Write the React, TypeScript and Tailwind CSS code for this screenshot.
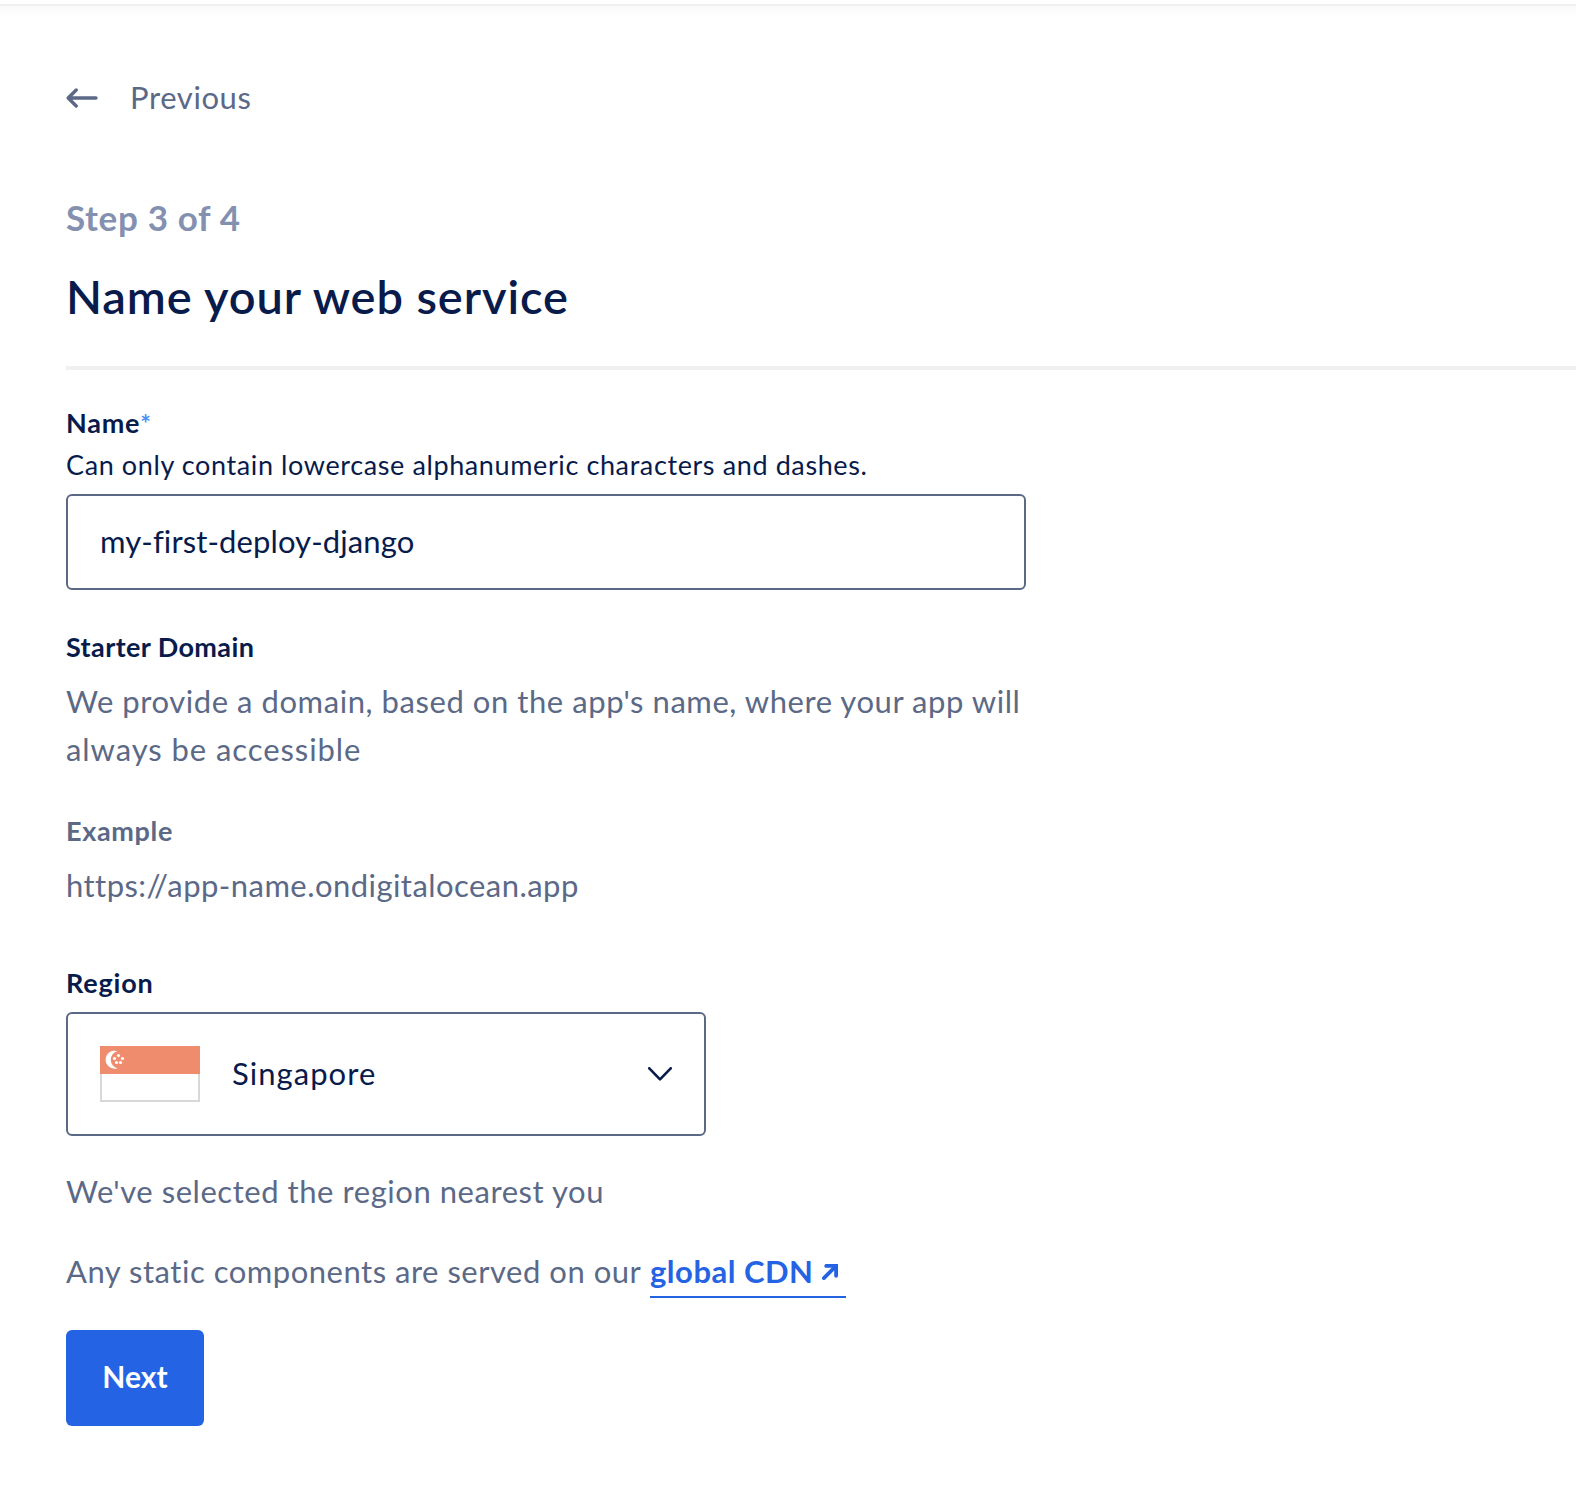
function ArrowLeft() {
  return (
    <svg width="32" height="20" viewBox="0 0 32 20" fill="none" stroke="#5b6987" strokeWidth="3.4" strokeLinecap="round" strokeLinejoin="round">
      <path d="M30 10H2.2M10.2 2L2.2 10l8 8" />
    </svg>
  );
}

function ChevronDown() {
  return (
    <svg width="24" height="14" viewBox="0 0 24 14" fill="none" stroke="#081b4b" strokeWidth="2.6" strokeLinecap="round" strokeLinejoin="round">
      <path d="M1.3 1.3L12 12.3 22.7 1.3" />
    </svg>
  );
}

function ExternalArrow() {
  return (
    <svg className="block" width="16" height="16" viewBox="0 0 16 16" fill="none" stroke="#2463e3" strokeWidth="3.8" strokeLinecap="round">
      <path d="M1.9 14.1L13.4 2.6" />
      <path d="M4.2 1.9h9.9v9.9" strokeLinejoin="miter" />
    </svg>
  );
}

function SingaporeFlag() {
  return (
    <svg width="100" height="56" viewBox="0 0 100 56">
      <rect x="1" y="1" width="98" height="54" fill="#fff" stroke="#d8d8d8" strokeWidth="2" />
      <rect width="100" height="28" fill="#f08c6e" />
      <path d="M17.6 5.2A9 9 0 1 0 17.6 22.2A8.7 8.7 0 0 1 17.6 5.2Z" fill="#fff" />
      <g fill="#fff">
        <circle cx="18.5" cy="9.5" r="1.6" />
        <circle cx="14.5" cy="12.5" r="1.6" />
        <circle cx="22.5" cy="12.5" r="1.6" />
        <circle cx="16.5" cy="16.5" r="1.6" />
        <circle cx="20.5" cy="16.5" r="1.6" />
      </g>
    </svg>
  );
}

export default function App() {
  return (
    <div className="min-h-[1488px] overflow-hidden bg-white font-['Lato',sans-serif] text-[31px] leading-[48px] text-[#5b6987]">
      <div className="mt-1 h-0.5 bg-[#f0f0f0]" />
      <div className="h-2.5 bg-linear-to-b from-[#f9f9f9] to-white" />

      <main className="pl-[66px]">
        <a href="#" className="mt-[57px] flex h-12 items-center">
          <span className="mt-0.5 w-16"><ArrowLeft /></span>
          <span className="tracking-[0.6px]">Previous</span>
        </a>

        <header className="border-b-4 border-[#f0f0f0] pb-[38px] pt-[72px]">
          <p className="text-[35px] font-bold tracking-[0.65px] text-[#8490b0]">Step 3 of 4</p>
          <h1 className="mt-[23px] text-[47px] font-semibold leading-[64px] tracking-[0.9px] text-[#081b4b]">
            Name your web service
          </h1>
        </header>

        <form className="w-[960px]">
          <label className="mt-[33px] flex h-10 text-[27px] font-bold leading-10 text-[#081b4b]">
            <span className="tracking-[0.75px]">Name</span>
            <span className="text-[25px] text-[#4d8df6]">*</span>
          </label>
          <p className="mt-0.5 whitespace-nowrap text-[27px] leading-10 tracking-[0.61px] text-[#081b4b]">
            Can only contain lowercase alphanumeric characters and dashes.
          </p>
          <input
            className="mt-[9px] block h-24 w-full rounded-md border-2 border-[#5b6987] bg-white px-8 pb-[3px] tracking-[0.1px] text-[#081b4b] outline-none"
            defaultValue="my-first-deploy-django"
          />

          <h2 className="mt-[37px] text-[27px] font-bold leading-10 tracking-[0.4px] text-[#081b4b]">Starter Domain</h2>
          <p className="mt-2.5 whitespace-nowrap">
            <span className="tracking-[0.56px]">We provide a domain, based on the app's name, where your app will</span>
            <br />
            <span className="tracking-[0.93px]">always be accessible</span>
          </p>

          <h3 className="mt-[38px] text-[27px] font-bold leading-10 tracking-[0.65px]">Example</h3>
          <p className="mt-2.5 tracking-[0.45px]">https://app-name.ondigitalocean.app</p>

          <h2 className="mt-[54px] text-[27px] font-bold leading-10 tracking-[0.8px] text-[#081b4b]">Region</h2>
          <button
            type="button"
            className="mt-[9px] flex h-31 w-[640px] items-center rounded-md border-2 border-[#5b6987] px-8 text-[#081b4b]"
          >
            <SingaporeFlag />
            <span className="ml-8 pb-[3px] tracking-[1.05px]">Singapore</span>
            <span className="ml-auto"><ChevronDown /></span>
          </button>

          <p className="mt-[31px] tracking-[0.55px]">We've selected the region nearest you</p>
          <p className="mt-8 flex whitespace-nowrap">
            <span className="w-[584px] tracking-[0.51px]">Any static components are served on our</span>
            <a href="#" className="flex h-[51px] w-[196px] items-start border-b-2 border-[#2463e3] font-bold text-[#2463e3]">
              <span className="tracking-[0.5px]">global CDN</span>
              <span className="ml-auto mr-2 mt-[17px]"><ExternalArrow /></span>
            </a>
          </p>

          <button
            type="button"
            className="mt-8 flex h-24 w-[138px] items-center justify-center rounded-md bg-[#2463e3] pb-1 text-[30px] font-bold text-white"
          >
            Next
          </button>
        </form>
      </main>
    </div>
  );
}
